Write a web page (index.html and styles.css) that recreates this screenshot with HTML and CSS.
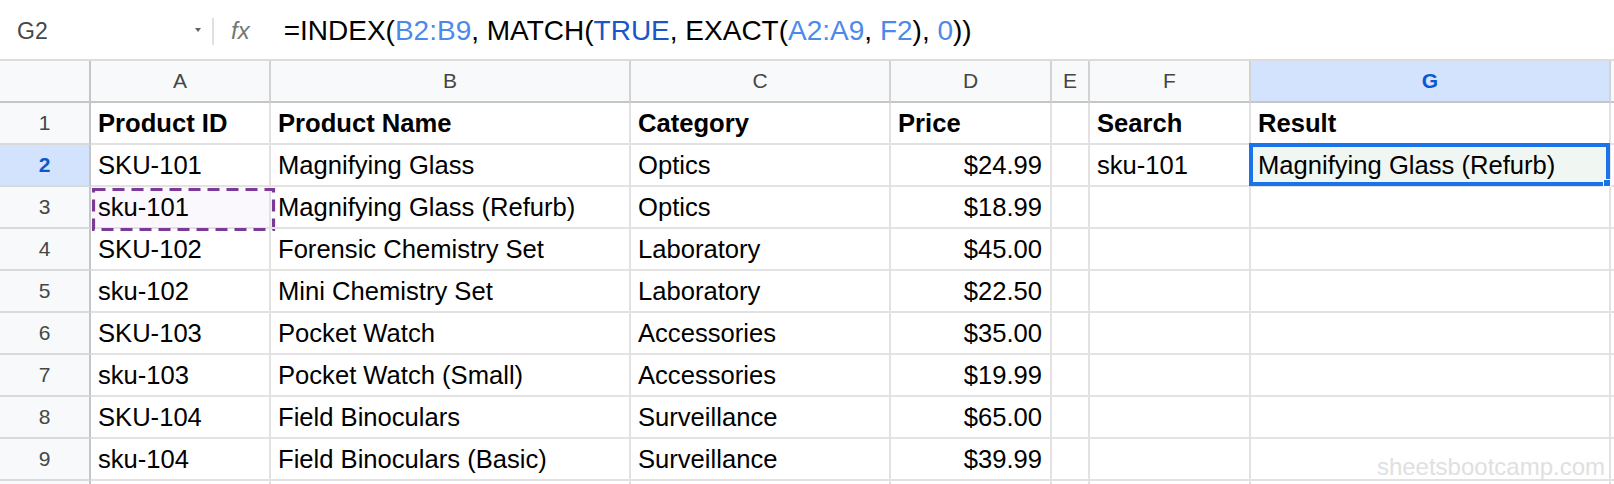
FILE: index.html
```html
<!DOCTYPE html>
<html>
<head>
<meta charset="utf-8">
<link rel="stylesheet" href="styles.css">
</head>
<body>
<div class="formula-bar">
  <div class="name-box"><span class="cell-ref">G2</span><span class="caret"></span></div>
  <div class="fx-divider"></div>
  <span class="fx">fx</span>
  <div class="formula">=INDEX(<span class="ref">B2:B9</span>, MATCH(<span class="bool">TRUE</span>, EXACT(<span class="ref">A2:A9</span>, <span class="ref">F2</span>), <span class="ref">0</span>))</div>
</div>
<div class="grid">
  <div class="corner"></div>
  <div class="ch">A</div><div class="ch">B</div><div class="ch">C</div><div class="ch">D</div><div class="ch">E</div><div class="ch">F</div><div class="ch ch-sel">G</div><div class="ch"></div>

  <div class="rh">1</div>
  <div class="c b">Product ID</div><div class="c b">Product Name</div><div class="c b">Category</div><div class="c b">Price</div><div class="c"></div><div class="c b">Search</div><div class="c b">Result</div><div class="c"></div>

  <div class="rh rh-sel">2</div>
  <div class="c">SKU-101</div><div class="c">Magnifying Glass</div><div class="c">Optics</div><div class="c num">$24.99</div><div class="c"></div><div class="c">sku-101</div><div class="c active">Magnifying Glass (Refurb)<div class="sel-box"><div class="handle"></div></div></div><div class="c"></div>

  <div class="rh">3</div>
  <div class="c copied">sku-101<div class="copy-box"><svg width="184" height="44" viewBox="0 0 184 44"><rect x="1.5" y="1.5" width="180" height="40" fill="none" stroke="#7b3a98" stroke-width="3.2" stroke-dasharray="12 7"/></svg></div></div><div class="c">Magnifying Glass (Refurb)</div><div class="c">Optics</div><div class="c num">$18.99</div><div class="c"></div><div class="c"></div><div class="c"></div><div class="c"></div>

  <div class="rh">4</div>
  <div class="c">SKU-102</div><div class="c">Forensic Chemistry Set</div><div class="c">Laboratory</div><div class="c num">$45.00</div><div class="c"></div><div class="c"></div><div class="c"></div><div class="c"></div>

  <div class="rh">5</div>
  <div class="c">sku-102</div><div class="c">Mini Chemistry Set</div><div class="c">Laboratory</div><div class="c num">$22.50</div><div class="c"></div><div class="c"></div><div class="c"></div><div class="c"></div>

  <div class="rh">6</div>
  <div class="c">SKU-103</div><div class="c">Pocket Watch</div><div class="c">Accessories</div><div class="c num">$35.00</div><div class="c"></div><div class="c"></div><div class="c"></div><div class="c"></div>

  <div class="rh">7</div>
  <div class="c">sku-103</div><div class="c">Pocket Watch (Small)</div><div class="c">Accessories</div><div class="c num">$19.99</div><div class="c"></div><div class="c"></div><div class="c"></div><div class="c"></div>

  <div class="rh">8</div>
  <div class="c">SKU-104</div><div class="c">Field Binoculars</div><div class="c">Surveillance</div><div class="c num">$65.00</div><div class="c"></div><div class="c"></div><div class="c"></div><div class="c"></div>

  <div class="rh">9</div>
  <div class="c">sku-104</div><div class="c">Field Binoculars (Basic)</div><div class="c">Surveillance</div><div class="c num">$39.99</div><div class="c"></div><div class="c"></div><div class="c"></div><div class="c"></div>

  <div class="rh"></div>
  <div class="c"></div><div class="c"></div><div class="c"></div><div class="c"></div><div class="c"></div><div class="c"></div><div class="c"></div><div class="c"></div>
</div>
<div class="watermark">sheetsbootcamp.com</div>
</body>
</html>
```
FILE: styles.css
```css
html, body {
  margin: 0;
  padding: 0;
  background: #ffffff;
  overflow: hidden;
}
body {
  width: 1614px;
  height: 484px;
  position: relative;
  font-family: "Liberation Sans", Arial, sans-serif;
  color: #000;
}

/* formula bar */
.formula-bar {
  height: 56px;
  padding-top: 3px;
  border-bottom: 2px solid #dadce0;
  display: flex;
  align-items: center;
  box-sizing: content-box;
}
.name-box {
  width: 212px;
  box-sizing: border-box;
  padding: 0 11px 0 17px;
  display: flex;
  align-items: center;
}
.cell-ref {
  font-size: 23px;
  color: #444746;
}
.caret {
  margin-left: auto;
  width: 0;
  height: 0;
  border-left: 3px solid transparent;
  border-right: 3px solid transparent;
  border-top: 4px solid #5f6368;
  margin-top: -3px;
}
.fx-divider {
  width: 2px;
  height: 27px;
  background: #e0e0e0;
}
.fx {
  margin-left: 17px;
  font-size: 24px;
  font-style: italic;
  color: #747775;
}
.formula {
  margin-left: 34px;
  font-size: 28px;
  color: #000;
  white-space: nowrap;
}
.formula .ref { color: #4b89ec; }
.formula .bool { color: #1a56c9; }

/* grid */
.grid {
  display: grid;
  grid-template-columns: 91px 180px 360px 260px 161px 38px 161px 360px 1fr;
  grid-template-rows: 42px;
  grid-auto-rows: 42px;
}
.corner, .ch, .rh, .c {
  box-sizing: border-box;
  display: flex;
  align-items: center;
  white-space: nowrap;
}
.corner {
  background: #f8f9fa;
  border-right: 2px solid #c4c7c5;
  border-bottom: 2px solid #c4c7c5;
}
.ch {
  background: #f8f9fa;
  border-right: 2px solid #d3d3d3;
  border-bottom: 2px solid #c4c7c5;
  justify-content: center;
  font-size: 21px;
  color: #444746;
}
.ch-sel {
  background: #d3e3fd;
  color: #0b57d0;
  font-weight: bold;
}
.rh {
  background: #f8f9fa;
  border-right: 2px solid #c4c7c5;
  border-bottom: 2px solid #dadada;
  justify-content: center;
  font-size: 21px;
  color: #444746;
}
.rh-sel {
  background: #d3e3fd;
  color: #0b57d0;
  font-weight: bold;
}
.c {
  border-right: 2px solid #e2e2e2;
  border-bottom: 2px solid #e2e2e2;
  padding: 0 8px 0 7px;
  font-size: 25.6px;
  position: relative;
}
.c.b { font-weight: bold; }
.c.num { justify-content: flex-end; }

.c.active {
  background: #f0f6f2;
}
.sel-box {
  position: absolute;
  left: -2px;
  top: -2px;
  right: -1px;
  bottom: -1px;
  border: 4px solid #1a73e8;
}
.handle {
  position: absolute;
  right: -5px;
  bottom: -5px;
  width: 6px;
  height: 6px;
  background: #1a73e8;
  border: 1px solid #ffffff;
}

.c.copied {
  background: #faf8fc;
}
.copy-box {
  position: absolute;
  left: 1px;
  top: 1px;
  width: 184px;
  height: 44px;
}
.copy-box svg { display: block; }

.watermark {
  position: absolute;
  right: 9px;
  top: 455px;
  font-size: 24px;
  line-height: 24px;
  color: #e0e0e0;
}
```
